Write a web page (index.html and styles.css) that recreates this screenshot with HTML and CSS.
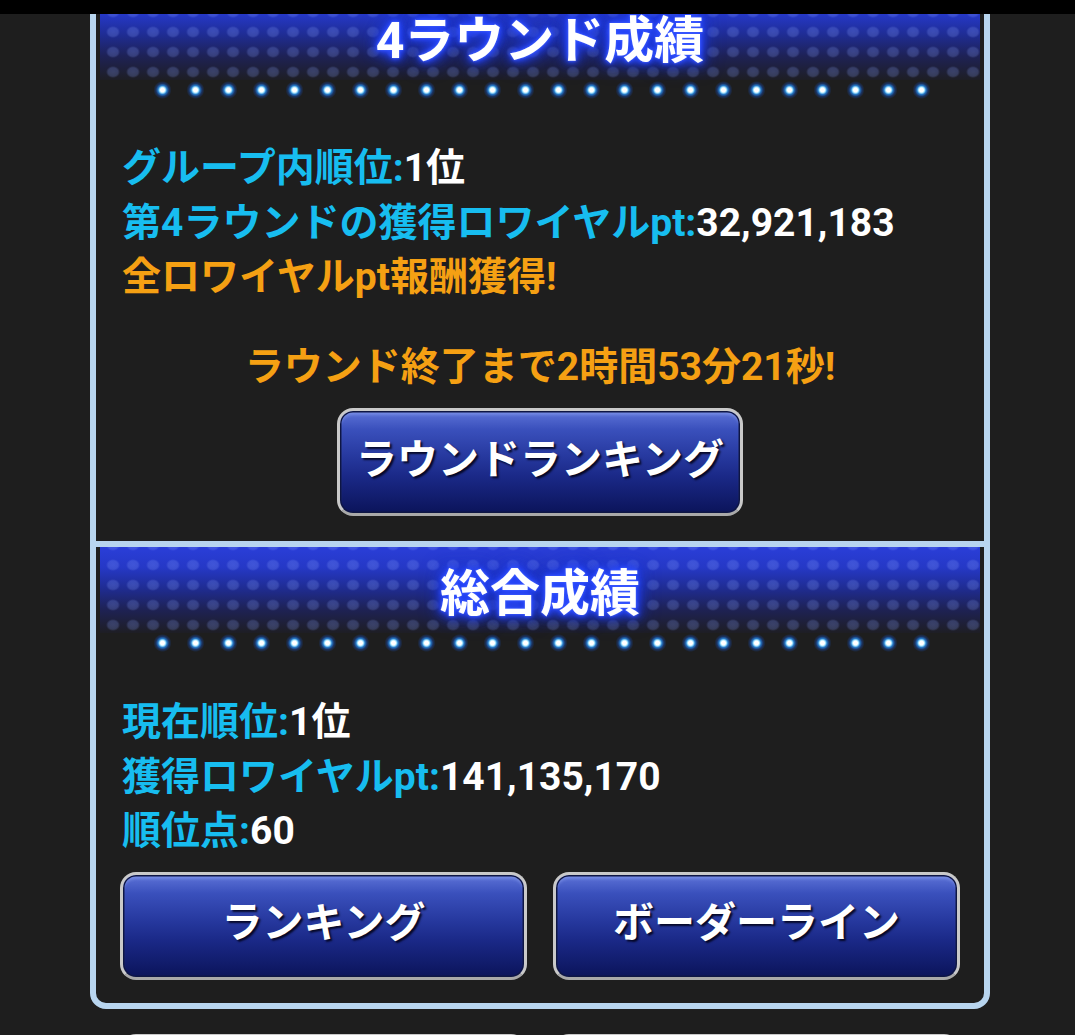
FILE: index.html
```html
<!DOCTYPE html>
<html lang="ja">
<head>
<meta charset="utf-8">
<title>成績</title>
<link rel="stylesheet" href="styles.css">
</head>
<body>
<div class="statusbar"></div>
<main class="panel">
  <section class="sec">
    <div class="head">
      <div class="band"><h2 class="title">4ラウンド成績</h2></div>
      <div class="sparks"></div>
    </div>
    <div class="body">
      <p class="line"><span class="lbl">グループ内順位:</span><span class="val">1位</span></p>
      <p class="line"><span class="lbl">第4ラウンドの獲得ロワイヤルpt:</span><span class="val">32,921,183</span></p>
      <p class="line note">全ロワイヤルpt報酬獲得!</p>
      <p class="line note center countdown">ラウンド終了まで2時間53分21秒!</p>
      <div class="btnrow single">
        <a class="btn wide">ラウンドランキング</a>
      </div>
    </div>
  </section>
  <section class="sec divided">
    <div class="head">
      <div class="band"><h2 class="title">総合成績</h2></div>
      <div class="sparks"></div>
    </div>
    <div class="body">
      <p class="line"><span class="lbl">現在順位:</span><span class="val">1位</span></p>
      <p class="line"><span class="lbl">獲得ロワイヤルpt:</span><span class="val">141,135,170</span></p>
      <p class="line"><span class="lbl">順位点:</span><span class="val">60</span></p>
      <div class="btnrow pair">
        <a class="btn">ランキング</a>
        <a class="btn">ボーダーライン</a>
      </div>
    </div>
  </section>
</main>
<div class="btnrow pair after">
  <a class="btn"></a>
  <a class="btn"></a>
</div>
</body>
</html>
```
FILE: styles.css
```css
html, body {
  margin: 0;
  padding: 0;
  background: #1e1e1e;
}
body {
  height: 1035px;
  overflow: hidden;
  font-family: Roboto, "Noto Sans CJK JP", sans-serif;
  font-weight: 700;
  color: #fff;
}
.statusbar {
  position: fixed;
  top: 0;
  left: 0;
  right: 0;
  height: 14px;
  background: #000;
  z-index: 10;
}
.panel {
  box-sizing: border-box;
  width: 900px;
  margin: -12px 0 0 90px;
  border: 6px solid #b8d5ef;
  border-radius: 0 0 16px 16px;
  background: #1e1e1e;
}
.sec.divided {
  border-top: 6px solid #b8d5ef;
}
.head {
  display: flex;
  flex-direction: column;
}
.band {
  height: 86px;
  margin: 0 4px;
  box-sizing: border-box;
  padding-top: 17px;
  background:
    radial-gradient(ellipse 7px 6px at 10px 10px, rgba(140,165,255,0.26) 0, rgba(140,165,255,0.22) 70%, rgba(140,165,255,0) 100%) 3px 8px / 20px 20px repeat,
    linear-gradient(#2a3ed8 0%, #2538c6 24%, #1f2c92 48%, #1e2256 72%, #1e1e24 100%);
}
.title {
  margin: 0;
  font-size: 50px;
  line-height: 60px;
  font-weight: 700;
  text-align: center;
  color: #fff;
  text-shadow: 0 0 2px #4a68ff, 0 0 4px #3050ff, 0 0 7px #2a48ff, 0 0 11px #2644ff, 0 0 16px #2040f0, 0 0 22px #1a34d0;
}
.sparks {
  width: 792px;
  height: 20px;
  margin: 0 auto;
  background: radial-gradient(circle at 16.5px 10px, #ffffff 0 2px, #a6e6ff 3px, rgba(40,150,255,0.75) 4.5px, rgba(20,100,255,0.3) 6.5px, rgba(20,90,255,0) 9px) 2px 0 / 33px 20px repeat-x;
}
.body {
  padding: 41px 24px 23px 26px;
}
.sec.divided .body {
  padding-top: 42px;
}
.line {
  margin: 0;
  font-size: 39px;
  line-height: 54.5px;
  white-space: nowrap;
}
.lbl { color: #17bdf0; }
.val { color: #ffffff; }
.note { color: #f5a013; }
.center { text-align: center; }
.countdown {
  margin-top: 35px;
  margin-left: -2px;
}
.btnrow {
  display: flex;
  gap: 26px;
  margin-top: 13px;
}
.btnrow.single {
  justify-content: center;
  margin-top: 14px;
  margin-left: -2px;
  padding-bottom: 2px;
}
.btnrow.pair {
  margin-left: -2px;
}
.btn {
  box-sizing: border-box;
  display: flex;
  align-items: center;
  justify-content: center;
  width: 407px;
  height: 108px;
  border: 3px solid #c9c9c9;
  border-bottom-color: #a9a9a9;
  border-radius: 16px;
  background: linear-gradient(#5d73d8 0%, #3a50bc 18%, #26389e 45%, #1a2886 65%, #0b145a 100%);
  box-shadow: inset 0 0 0 1.5px #0e1644, inset 0 4px 3px rgba(170,190,255,0.35);
  font-size: 41px;
  line-height: 1;
  color: #fff;
  text-shadow: 2px 2px 2px rgba(0,0,20,0.85);
  padding-bottom: 4px;
}
.btn.wide {
  width: 406px;
}
.btnrow.after {
  margin: 25px 0 0 120px;
}
```
